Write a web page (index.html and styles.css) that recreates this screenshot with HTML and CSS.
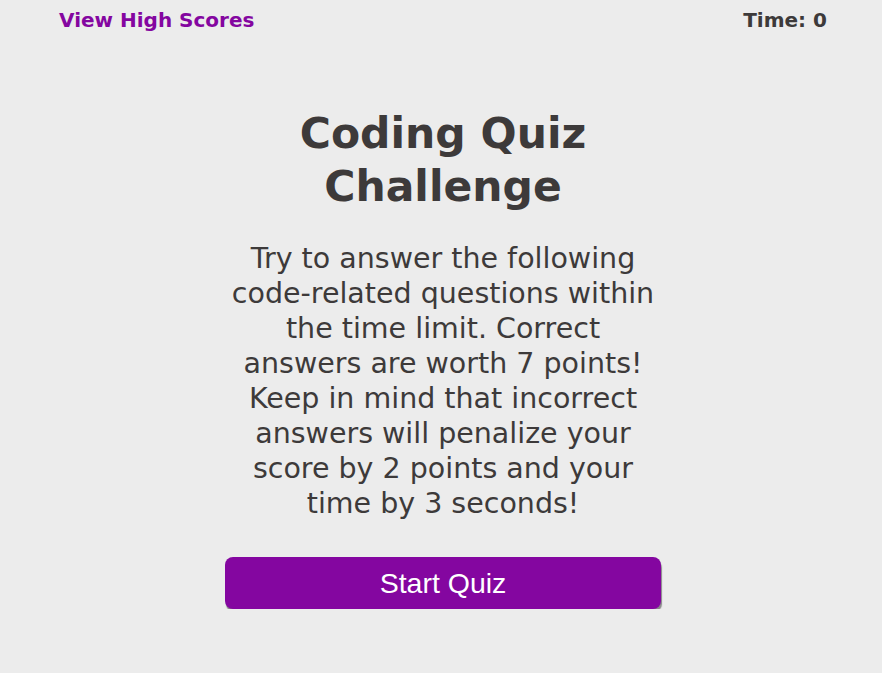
FILE: index.html
```html
<!DOCTYPE html>
<html lang="en">
<head>
<meta charset="utf-8">
<title>Coding Quiz</title>
<link rel="stylesheet" href="styles.css">
</head>
<body>
<header class="topbar">
  <a class="scores-link" href="#">View High Scores</a>
  <div class="timer">Time: <span>0</span></div>
</header>
<main class="main">
  <section class="intro">
    <h1 class="title">Coding Quiz Challenge</h1>
    <p class="desc">Try to answer the following code-related questions within the time limit. Correct answers are worth 7 points! Keep in mind that incorrect answers will penalize your score by 2 points and your time by 3 seconds!</p>
    <button class="start-btn" type="button">Start Quiz</button>
  </section>
</main>
</body>
</html>
```

FILE: styles.css
```css
html, body {
  margin: 0;
  padding: 0;
}
body {
  background: #ececec;
  color: #3d3a3a;
  font-family: "DejaVu Sans", Verdana, sans-serif;
}
.topbar {
  display: flex;
  justify-content: space-between;
  align-items: flex-start;
  padding: 8px 55px 0 59px;
  font-size: 20px;
  line-height: 24px;
  font-weight: bold;
}
.scores-link {
  color: #8406a0;
  text-decoration: none;
}
.timer {
  color: #3d3a3a;
}
.main {
  padding-left: 4px;
}
.intro {
  width: 436px;
  margin: 75px auto 0;
  display: flex;
  flex-direction: column;
  align-items: center;
  text-align: center;
}
.title {
  margin: 0;
  font-size: 42.5px;
  line-height: 53px;
  font-weight: bold;
  width: 330px;
}
.desc {
  margin: 28px 0 0;
  font-size: 28.5px;
  line-height: 35px;
}
.start-btn {
  margin-top: 36px;
  width: 436px;
  height: 52px;
  border: none;
  border-radius: 8px;
  background: #8406a0;
  color: #ffffff;
  font-family: "Liberation Sans", Arial, sans-serif;
  font-size: 28.5px;
  box-shadow: 1px 3px 1px #8a8a8a;
  cursor: pointer;
}
```
